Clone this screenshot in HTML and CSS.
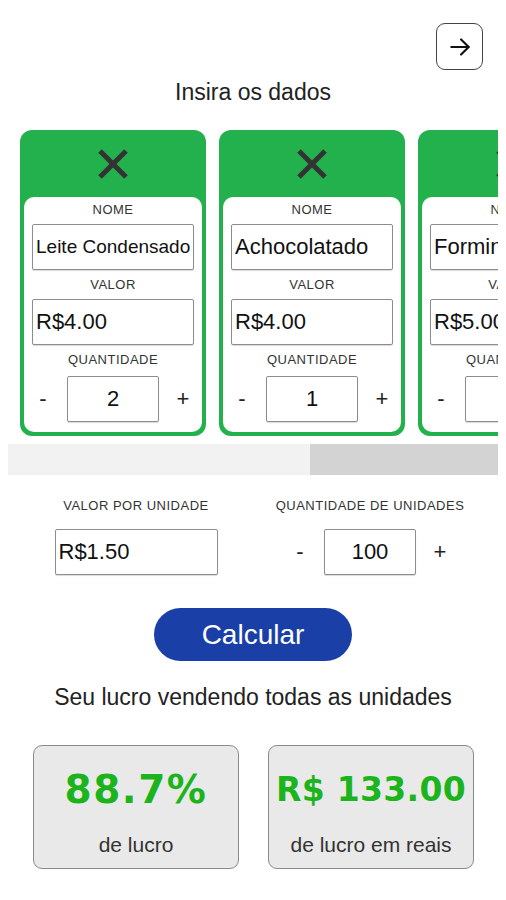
FILE: index.html
```html
<!DOCTYPE html>
<html lang="pt-BR">
<head>
    <meta charset="UTF-8">
    <meta name="viewport" content="width=device-width, initial-scale=1.0">
    <title>Calculadora de Lucro</title>
    <link rel="stylesheet" href="styles.css">
</head>
<body>
    <div class="topbar">
        <button class="next-btn" aria-label="Próximo">
            <svg width="26" height="26" viewBox="0 0 24 24" fill="none" stroke="#111" stroke-width="2" stroke-linecap="round" stroke-linejoin="round">
                <line x1="4" y1="12" x2="20" y2="12"/>
                <polyline points="13,5 20,12 13,19"/>
            </svg>
        </button>
    </div>

    <h1 class="title">Insira os dados</h1>

    <div class="scroller">
        <div class="cards">
            <div class="card">
                <div class="card-head">
                    <svg width="32" height="32" viewBox="0 0 32 32" stroke="#333" stroke-width="5">
                        <line x1="3" y1="3" x2="29" y2="29"/>
                        <line x1="29" y1="3" x2="3" y2="29"/>
                    </svg>
                </div>
                <div class="card-body">
                    <span class="label">NOME</span>
                    <div class="field small">Leite Condensado</div>
                    <span class="label">VALOR</span>
                    <div class="field">R$4.00</div>
                    <span class="label">QUANTIDADE</span>
                    <div class="qty">
                        <span class="sign">-</span>
                        <div class="field qty-box">2</div>
                        <span class="sign">+</span>
                    </div>
                </div>
            </div>

            <div class="card">
                <div class="card-head">
                    <svg width="32" height="32" viewBox="0 0 32 32" stroke="#333" stroke-width="5">
                        <line x1="3" y1="3" x2="29" y2="29"/>
                        <line x1="29" y1="3" x2="3" y2="29"/>
                    </svg>
                </div>
                <div class="card-body">
                    <span class="label">NOME</span>
                    <div class="field">Achocolatado</div>
                    <span class="label">VALOR</span>
                    <div class="field">R$4.00</div>
                    <span class="label">QUANTIDADE</span>
                    <div class="qty">
                        <span class="sign">-</span>
                        <div class="field qty-box">1</div>
                        <span class="sign">+</span>
                    </div>
                </div>
            </div>

            <div class="card">
                <div class="card-head">
                    <svg width="32" height="32" viewBox="0 0 32 32" stroke="#333" stroke-width="5">
                        <line x1="3" y1="3" x2="29" y2="29"/>
                        <line x1="29" y1="3" x2="3" y2="29"/>
                    </svg>
                </div>
                <div class="card-body">
                    <span class="label">NOME</span>
                    <div class="field">Forminhas</div>
                    <span class="label">VALOR</span>
                    <div class="field">R$5.00</div>
                    <span class="label">QUANTIDADE</span>
                    <div class="qty">
                        <span class="sign">-</span>
                        <div class="field qty-box">1</div>
                        <span class="sign">+</span>
                    </div>
                </div>
            </div>
        </div>
        <div class="scrollbar"><div class="thumb"></div></div>
    </div>

    <div class="unit-row">
        <div class="unit-col">
            <span class="label">VALOR POR UNIDADE</span>
            <div class="field unit-price">R$1.50</div>
        </div>
        <div class="unit-col">
            <span class="label">QUANTIDADE DE UNIDADES</span>
            <div class="qty">
                <span class="sign">-</span>
                <div class="field qty-box">100</div>
                <span class="sign">+</span>
            </div>
        </div>
    </div>

    <div class="action">
        <button class="calc-btn">Calcular</button>
    </div>

    <p class="subtitle">Seu lucro vendendo todas as unidades</p>

    <div class="results">
        <div class="result">
            <span class="result-value">88.7%</span>
            <span class="result-label">de lucro</span>
        </div>
        <div class="result">
            <span class="result-value money">R$ 133.00</span>
            <span class="result-label">de lucro em reais</span>
        </div>
    </div>
</body>
</html>
```

FILE: styles.css
```css
body {
    margin: 0;
    padding: 0;
    width: 506px;
    font-family: "Liberation Sans", Arial, sans-serif;
    color: #222;
    background: #ffffff;
}
.topbar {
    display: flex;
    justify-content: flex-end;
    padding: 23px 23px 0 0;
}
.next-btn {
    width: 47px;
    height: 47px;
    margin: 0;
    padding: 0;
    display: flex;
    align-items: center;
    justify-content: center;
    background: #fff;
    border: 1.5px solid #444;
    border-radius: 9px;
}
.title {
    margin: 9px 0 0 0;
    font-size: 23px;
    line-height: 27px;
    font-weight: normal;
    text-align: center;
    color: #222;
}
.scroller {
    margin: 14px 8px 0 8px;
}
.cards {
    display: flex;
    gap: 13px;
    padding: 10px 0 8px 12px;
    overflow: hidden;
}
.card {
    flex: 0 0 186px;
    min-width: 0;
    padding: 0 4px 4px 4px;
    box-sizing: border-box;
    background: #23b14d;
    border-radius: 12px;
}
.card-head {
    height: 67px;
    display: flex;
    align-items: center;
    justify-content: center;
}
.card-body {
    display: flex;
    flex-direction: column;
    align-items: center;
    padding: 5px 8px 10px 8px;
    background: #fff;
    border-radius: 10px;
}
.label {
    font-size: 13px;
    line-height: 16px;
    letter-spacing: 0.5px;
    color: #333;
}
.card-body .label + .field {
    margin-top: 6px;
}
.card-body .field + .label {
    margin-top: 7px;
}
.card-body .label + .qty {
    margin-top: 8px;
}
.field {
    width: 100%;
    height: 46px;
    box-sizing: border-box;
    display: flex;
    align-items: center;
    padding-left: 3px;
    font-size: 22px;
    color: #111;
    background: #fff;
    border: 1.5px solid #8d8d8d;
    border-radius: 2px;
    box-shadow: 0 1px 1px rgba(0, 0, 0, 0.15);
    white-space: nowrap;
    overflow: hidden;
}
.field.small {
    font-size: 19px;
}
.qty {
    display: flex;
    align-items: center;
    justify-content: center;
    gap: 9px;
}
.qty-box {
    width: 92px;
    flex-shrink: 0;
    justify-content: center;
    padding-left: 0;
}
.sign {
    width: 30px;
    text-align: center;
    font-size: 22px;
    color: #222;
}
.scrollbar {
    height: 31px;
    background: #f2f2f2;
    display: flex;
    justify-content: flex-end;
}
.thumb {
    width: 188px;
    background: #d3d3d3;
}
.unit-row {
    display: grid;
    grid-template-columns: 1fr 1fr;
    padding: 0 19px;
    margin-top: 23px;
}
.unit-col {
    display: flex;
    flex-direction: column;
    align-items: center;
    gap: 15px;
}
.unit-price {
    width: 163px;
}
.action {
    display: flex;
    justify-content: center;
    margin-top: 33px;
}
.calc-btn {
    width: 198px;
    height: 53px;
    margin: 0;
    padding: 0;
    font-family: "Liberation Sans", Arial, sans-serif;
    font-size: 28px;
    color: #fff;
    background: #1a40a8;
    border: none;
    border-radius: 27px;
}
.subtitle {
    margin: 23px 0 0 0;
    font-size: 23px;
    line-height: 27px;
    text-align: center;
    color: #222;
}
.results {
    display: flex;
    justify-content: center;
    gap: 29px;
    margin-top: 34px;
    padding-left: 1px;
}
.result {
    width: 206px;
    height: 124px;
    box-sizing: border-box;
    display: flex;
    flex-direction: column;
    align-items: center;
    padding-top: 20px;
    background: #e9e9e9;
    border: 1.5px solid #8a8a8a;
    border-radius: 9px;
}
.result-value {
    font-family: "DejaVu Sans", sans-serif;
    font-weight: bold;
    font-size: 39px;
    line-height: 48px;
    letter-spacing: 1.5px;
    color: #1cb41c;
}
.result-value.money {
    font-size: 33px;
    letter-spacing: 0.3px;
}
.result-label {
    margin-top: 19px;
    font-size: 21px;
    line-height: 24px;
    color: #333;
}
```
